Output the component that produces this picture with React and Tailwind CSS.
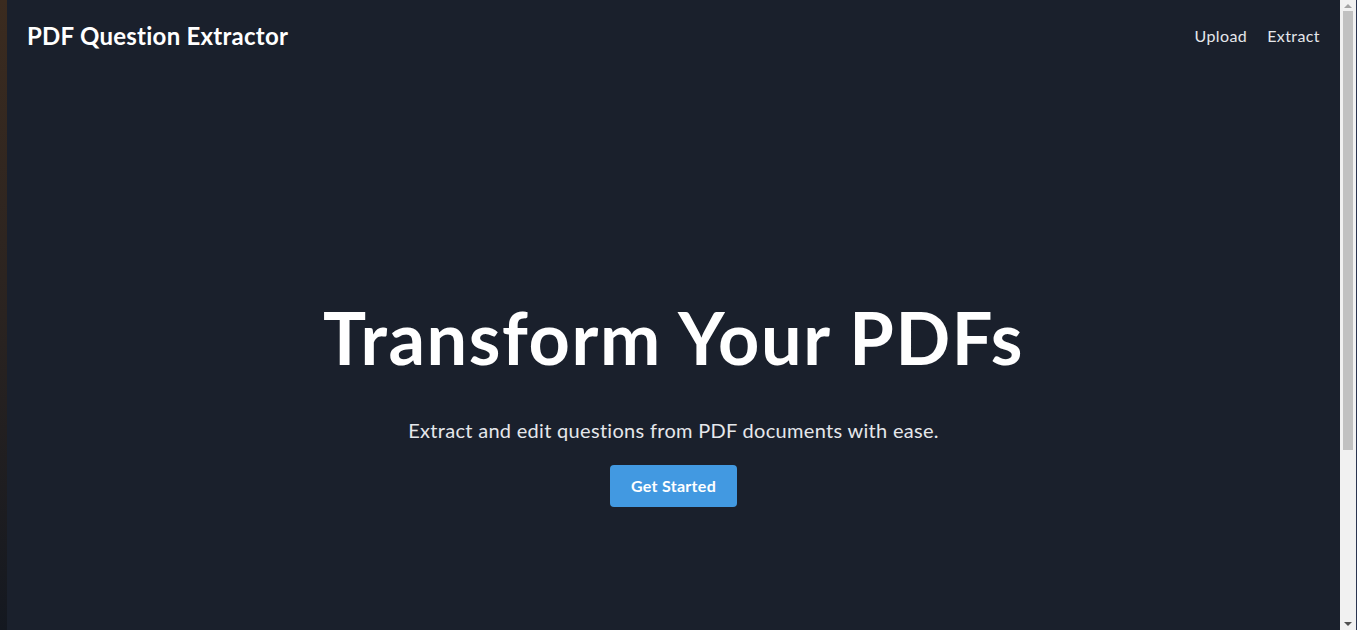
export default function App() {
  const font = { fontFamily: 'Lato, "Open Sans", sans-serif' };

  return (
    <div className="flex h-[630px] w-full overflow-hidden bg-[#1a202c]" style={font}>
      {/* desktop edge on the left */}
      <div className="w-[7px] shrink-0 bg-gradient-to-b from-[#3b2b1f] via-[#2a2320] to-[#141820]" />

      {/* page */}
      <div className="flex min-w-0 flex-1 flex-col bg-[#1a202c] text-white">
        <header className="flex h-[72px] items-center justify-between px-5">
          <span className="text-2xl font-bold tracking-[0.25px]">PDF Question Extractor</span>
          <nav className="flex items-center gap-5 text-base tracking-[0.4px] text-gray-200">
            <a href="#">Upload</a>
            <a href="#">Extract</a>
          </nav>
        </header>

        <section className="flex flex-col items-center pt-[229px] text-center">
          <h1 className="text-7xl font-bold leading-none tracking-[1.6px]">Transform Your PDFs</h1>
          <p className="mt-[43px] text-xl leading-7 tracking-[0.3px] text-gray-200">
            Extract and edit questions from PDF documents with ease.
          </p>
          <button className="mt-[21px] h-[42px] w-[127px] rounded bg-[#4299e1] text-base font-bold tracking-[0.3px] text-white">
            Get Started
          </button>
        </section>
      </div>

      {/* scrollbar */}
      <div className="flex w-4 shrink-0 flex-col items-center bg-[#f1f1f1]">
        <div className="mt-[4px] h-0 w-0 border-x-[4px] border-b-[4px] border-x-transparent border-b-[#a3a3a3]" />
        <div className="mt-[3px] h-[439px] w-[10px] bg-[#c1c1c1]" />
        <div className="flex-1" />
        <div className="mb-[4px] h-0 w-0 border-x-[4px] border-t-[4px] border-x-transparent border-t-[#505050]" />
      </div>
      <div className="w-px shrink-0 bg-[#2a3550]" />
    </div>
  );
}
